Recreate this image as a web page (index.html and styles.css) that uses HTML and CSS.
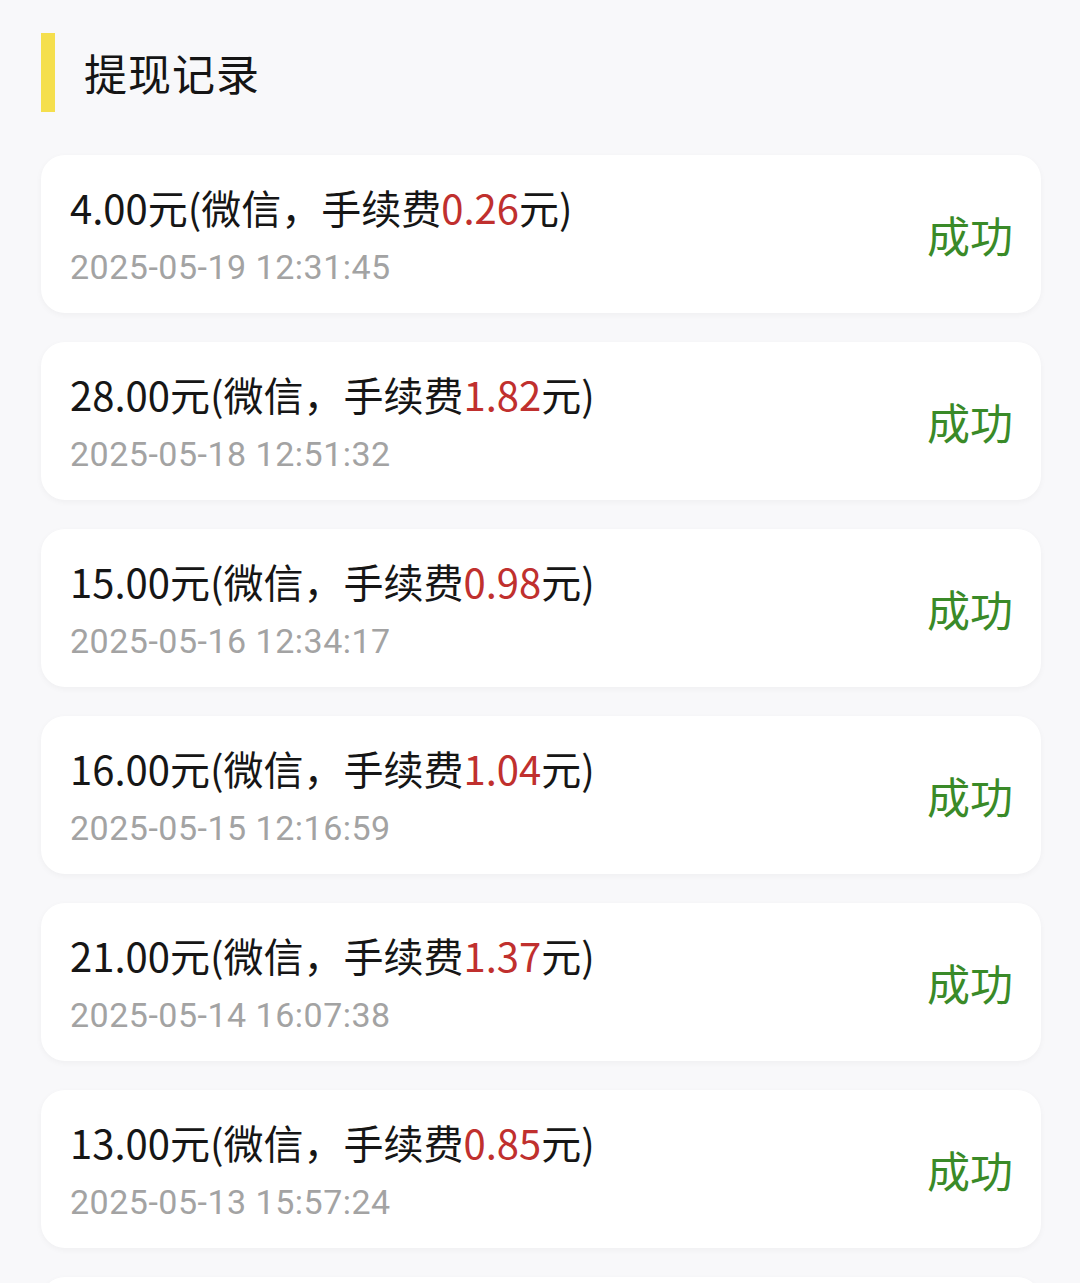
FILE: index.html
```html
<!DOCTYPE html>
<html lang="zh">
<head>
<meta charset="utf-8">
<link rel="stylesheet" href="styles.css">
</head>
<body>
<div class="page">
  <div class="header">
    <div class="bar"></div>
    <h1 class="title">提现记录</h1>
  </div>
  <div class="list">
    <div class="card">
      <div class="info">
        <div class="main">4.00元(微信，手续费<span class="fee">0.26</span>元)</div>
        <div class="date">2025-05-19 12:31:45</div>
      </div>
      <div class="status">成功</div>
    </div>
    <div class="card">
      <div class="info">
        <div class="main">28.00元(微信，手续费<span class="fee">1.82</span>元)</div>
        <div class="date">2025-05-18 12:51:32</div>
      </div>
      <div class="status">成功</div>
    </div>
    <div class="card">
      <div class="info">
        <div class="main">15.00元(微信，手续费<span class="fee">0.98</span>元)</div>
        <div class="date">2025-05-16 12:34:17</div>
      </div>
      <div class="status">成功</div>
    </div>
    <div class="card">
      <div class="info">
        <div class="main">16.00元(微信，手续费<span class="fee">1.04</span>元)</div>
        <div class="date">2025-05-15 12:16:59</div>
      </div>
      <div class="status">成功</div>
    </div>
    <div class="card">
      <div class="info">
        <div class="main">21.00元(微信，手续费<span class="fee">1.37</span>元)</div>
        <div class="date">2025-05-14 16:07:38</div>
      </div>
      <div class="status">成功</div>
    </div>
    <div class="card">
      <div class="info">
        <div class="main">13.00元(微信，手续费<span class="fee">0.85</span>元)</div>
        <div class="date">2025-05-13 15:57:24</div>
      </div>
      <div class="status">成功</div>
    </div>
    <div class="card card-peek"></div>
  </div>
</div>
</body>
</html>
```

FILE: styles.css
```css
html, body {
  margin: 0;
  padding: 0;
  background: #f8f8fa;
  overflow: hidden;
}
body {
  font-family: "Noto Sans CJK SC", "Noto Sans", sans-serif;
  color: #1a1a1a;
}
.page {
  height: 1283px;
  overflow: hidden;
  padding: 33px 39px 0 41px;
}
.header {
  display: flex;
  align-items: center;
  height: 79px;
  gap: 29px;
}
.bar {
  width: 14px;
  height: 79px;
  background: #f5df4d;
}
.title {
  margin: 0;
  font-size: 43px;
  letter-spacing: 1px;
  font-weight: 400;
  line-height: 1;
  color: #151515;
}
.list {
  margin-top: 43px;
  display: flex;
  flex-direction: column;
  gap: 29px;
}
.card {
  background: #fff;
  border-radius: 24px;
  height: 158px;
  box-sizing: border-box;
  padding: 0 28px 0 29px;
  display: flex;
  align-items: center;
  justify-content: space-between;
  box-shadow: 0 2px 6px rgba(0, 0, 0, 0.04);
  flex-shrink: 0;
}
.info {
  display: flex;
  flex-direction: column;
  gap: 16px;
  margin-top: 2px;
}
.main {
  font-size: 40px;
  line-height: 48px;
  color: #161616;
}
.fee {
  color: #c0302e;
}
.date {
  font-family: Roboto, "Noto Sans CJK SC", sans-serif;
  font-size: 34px;
  letter-spacing: 0.5px;
  line-height: 40px;
  color: #a3a3a3;
}
.status {
  font-size: 43px;
  color: #3a8a28;
  line-height: 1;
  margin-top: 0;
}
```
